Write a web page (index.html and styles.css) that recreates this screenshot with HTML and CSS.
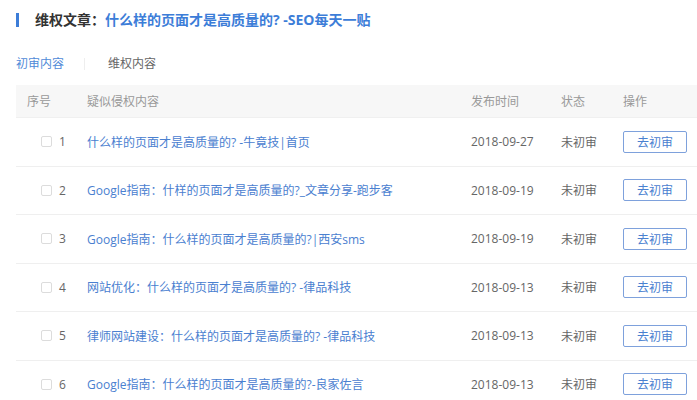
FILE: index.html
```html
<!DOCTYPE html>
<html lang="zh">
<head>
<meta charset="utf-8">
<link rel="stylesheet" href="styles.css">
</head>
<body>
<div class="page">
  <h1 class="title"><span class="bar"></span><span class="label">维权文章：</span><span class="name">什么样的页面才是高质量的? -SEO每天一贴</span></h1>
  <div class="tabs">
    <span class="tab active">初审内容</span>
    <span class="sep"></span>
    <span class="tab">维权内容</span>
  </div>
  <div class="table">
    <div class="row head">
      <div class="c1">序号</div>
      <div class="c2">疑似侵权内容</div>
      <div class="c3">发布时间</div>
      <div class="c4">状态</div>
      <div class="c5">操作</div>
    </div>
    <div class="row">
      <div class="c1"><span class="cb"></span><span class="num">1</span></div>
      <div class="c2"><a class="link">什么样的页面才是高质量的? -牛竟技|首页</a></div>
      <div class="c3">2018-09-27</div>
      <div class="c4">未初审</div>
      <div class="c5"><span class="btn">去初审</span></div>
    </div>
    <div class="row">
      <div class="c1"><span class="cb"></span><span class="num">2</span></div>
      <div class="c2"><a class="link">Google指南：什样的页面才是高质量的?_文章分享-跑步客</a></div>
      <div class="c3">2018-09-19</div>
      <div class="c4">未初审</div>
      <div class="c5"><span class="btn">去初审</span></div>
    </div>
    <div class="row">
      <div class="c1"><span class="cb"></span><span class="num">3</span></div>
      <div class="c2"><a class="link">Google指南：什么样的页面才是高质量的?|西安sms</a></div>
      <div class="c3">2018-09-19</div>
      <div class="c4">未初审</div>
      <div class="c5"><span class="btn">去初审</span></div>
    </div>
    <div class="row">
      <div class="c1"><span class="cb"></span><span class="num">4</span></div>
      <div class="c2"><a class="link">网站优化：什么样的页面才是高质量的? -律品科技</a></div>
      <div class="c3">2018-09-13</div>
      <div class="c4">未初审</div>
      <div class="c5"><span class="btn">去初审</span></div>
    </div>
    <div class="row">
      <div class="c1"><span class="cb"></span><span class="num">5</span></div>
      <div class="c2"><a class="link">律师网站建设：什么样的页面才是高质量的? -律品科技</a></div>
      <div class="c3">2018-09-13</div>
      <div class="c4">未初审</div>
      <div class="c5"><span class="btn">去初审</span></div>
    </div>
    <div class="row">
      <div class="c1"><span class="cb"></span><span class="num">6</span></div>
      <div class="c2"><a class="link">Google指南：什么样的页面才是高质量的?-良家佐言</a></div>
      <div class="c3">2018-09-13</div>
      <div class="c4">未初审</div>
      <div class="c5"><span class="btn">去初审</span></div>
    </div>
  </div>
</div>
</body>
</html>
```
FILE: styles.css
```css
html, body {
  margin: 0;
  padding: 0;
  background: #fff;
}
body {
  font-family: "Open Sans", "Noto Sans CJK SC", sans-serif;
  color: #666;
  font-size: 12px;
  overflow: hidden;
  width: 697px;
  height: 400px;
}
.page {
  padding: 10px 0 0 16px;
}
.title {
  margin: 0;
  display: flex;
  align-items: center;
  height: 20px;
  font-size: 14px;
  font-weight: 700;
  line-height: 20px;
  white-space: nowrap;
}
.title .bar {
  width: 3px;
  height: 14px;
  background: #3c7dd8;
  margin-right: 16px;
}
.title .label {
  color: #333;
}
.title .name {
  color: #3c7dd8;
}
.tabs {
  display: flex;
  align-items: center;
  margin-top: 26px;
  height: 16px;
  line-height: 16px;
}
.tab {
  color: #666;
}
.tab.active {
  color: #4f8ad8;
}
.sep {
  width: 1px;
  height: 12px;
  background: #eee;
  margin: 0 23px 0 20px;
}
.table {
  margin-top: 13px;
}
.row {
  display: grid;
  grid-template-columns: 71px 384px 90px 62px 1fr;
  align-items: center;
  height: 47.5px;
  border-bottom: 1px solid #efefef;
  color: #666;
  white-space: nowrap;
}
.row.head {
  height: 32px;
  background: #f7f7f7;
  color: #999;
  border-bottom: 1px solid #f0f0f0;
}
.head .c1 {
  padding-left: 11px;
}
.c1 {
  display: flex;
  align-items: center;
  padding-left: 25px;
}
.cb {
  width: 9px;
  height: 9px;
  border: 1px solid #dcdcdc;
  border-radius: 2px;
  background: #fff;
  margin-right: 7px;
}
.num {
  color: #666;
}
.link {
  color: #4a80d0;
  text-decoration: none;
}
.btn {
  display: inline-flex;
  align-items: center;
  justify-content: center;
  width: 62px;
  height: 20px;
  border: 1px solid #7ea1dc;
  border-radius: 2px;
  color: #4a80d0;
  box-sizing: content-box;
}
```
